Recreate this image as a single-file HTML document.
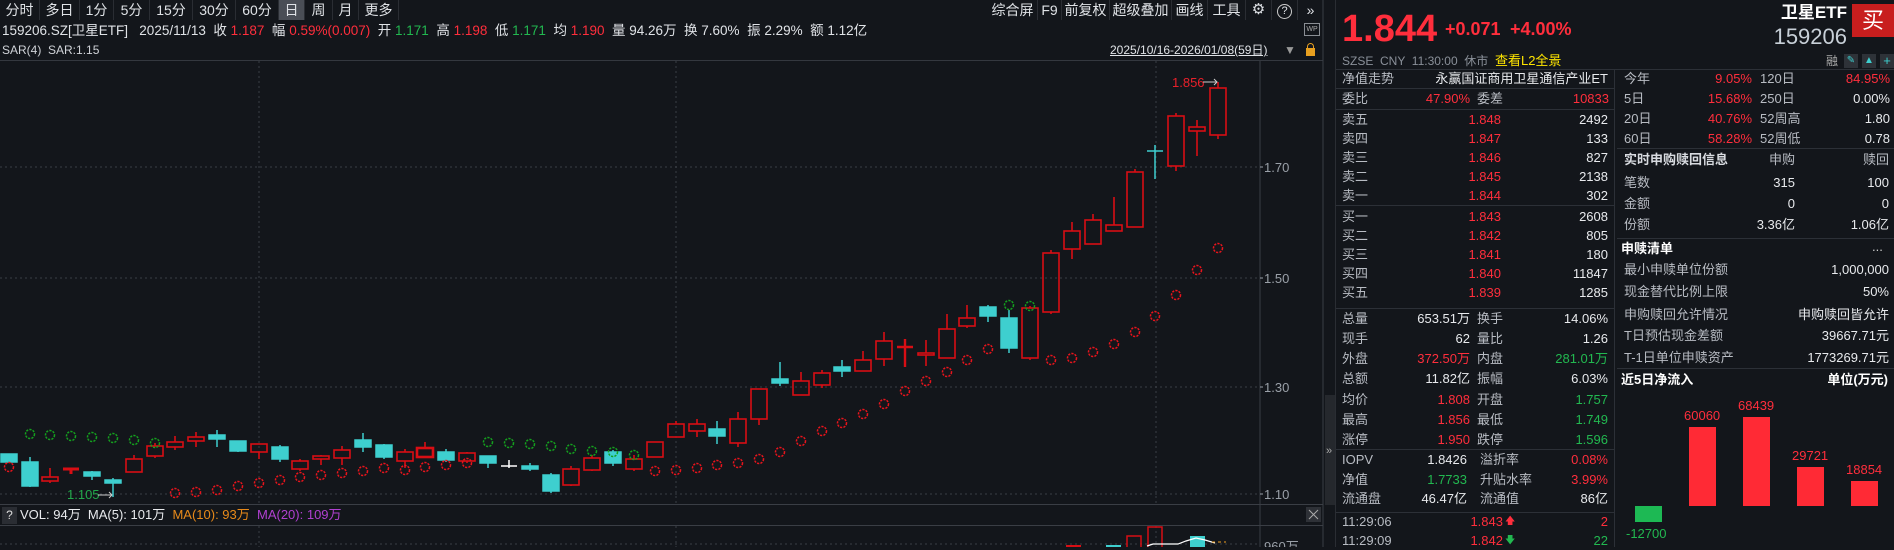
<!DOCTYPE html>
<html><head><meta charset="utf-8">
<style>
*{margin:0;padding:0;box-sizing:border-box}
body{width:1894px;height:547px;background:#13161b;overflow:hidden;position:relative;font-family:"Liberation Sans","Noto Sans CJK SC",sans-serif;color:#d4d7dc;font-size:13px}
.a{position:absolute;white-space:nowrap;line-height:18px;height:18px}
.r{text-align:right}
.red{color:#ff2e3c}.grn{color:#22b850}.wh{color:#e8eaed}.gy{color:#b8bcc3}
.tab{position:absolute;top:0;height:20px;line-height:20px;font-size:14px;color:#dfe2e6;text-align:center;border-right:1px solid #2a2d33}
.hl{position:absolute;height:1px;background:#2c3037}
.vl{position:absolute;width:1px;background:#2c3037}
</style></head><body>

<div class="tab" style="left:0;width:40px">分时</div>
<div class="tab" style="left:40px;width:40px">多日</div>
<div class="tab" style="left:80px;width:34px">1分</div>
<div class="tab" style="left:114px;width:36px">5分</div>
<div class="tab" style="left:150px;width:43px">15分</div>
<div class="tab" style="left:193px;width:43px">30分</div>
<div class="tab" style="left:236px;width:43px">60分</div>
<div class="tab" style="left:279px;width:26px;background:#4a4e56">日</div>
<div class="tab" style="left:305px;width:28px">周</div>
<div class="tab" style="left:333px;width:26px">月</div>
<div class="tab" style="left:359px;width:40px">更多</div>

<div class="tab" style="left:988px;width:50px">综合屏</div>
<div class="tab" style="left:1038px;width:24px">F9</div>
<div class="tab" style="left:1062px;width:48px">前复权</div>
<div class="tab" style="left:1110px;width:62px">超级叠加</div>
<div class="tab" style="left:1172px;width:36px">画线</div>
<div class="tab" style="left:1208px;width:38px">工具</div>
<div class="tab" style="left:1246px;width:26px;font-size:15px">⚙</div>
<div class="tab" style="left:1272px;width:26px"><span style="display:inline-block;width:15px;height:15px;border:1.3px solid #ccc;border-radius:50%;font-size:11px;line-height:13px;vertical-align:middle">?</span></div>
<div class="tab" style="left:1298px;width:25px;border:none">»</div>

<div class="a" style="left:2px;top:22px;font-size:13.5px;color:#e0e3e7">159206.SZ[卫星ETF]&nbsp;&nbsp; 2025/11/13 &nbsp;收 <span class="red">1.187</span> &nbsp;幅 <span class="red">0.59%(0.007)</span> &nbsp;开 <span class="grn">1.171</span> &nbsp;高 <span class="red">1.198</span> &nbsp;低 <span class="grn">1.171</span> &nbsp;均 <span class="red">1.190</span> &nbsp;量 94.26万 &nbsp;换 7.60% &nbsp;振 2.29% &nbsp;额 1.12亿</div>
<div class="a" style="left:2px;top:41px;font-size:12px;color:#d0d3d8">SAR(4) &nbsp;SAR:1.15</div>
<div class="a" style="left:1110px;top:41px;font-size:12px;color:#e0e3e7;text-decoration:underline">2025/10/16-2026/01/08(59日)</div>
<div class="a" style="left:1284px;top:41px;font-size:12px;color:#999">▼</div>
<div style="position:absolute;left:1306px;top:48px;width:9px;height:8px;background:#e8a020"></div>
<div style="position:absolute;left:1307px;top:43px;width:7px;height:6px;border:1.5px solid #e8a020;border-bottom:none;border-radius:4px 4px 0 0"></div>
<div style="position:absolute;left:1304px;top:23px;width:16px;height:13px;border:1px solid #8a8e94;font-size:7px;color:#aaa;line-height:11px;text-align:center">WP</div>
<div class="hl" style="left:0;top:60px;width:1323px;background:#34383f"></div>

<svg style="position:absolute;left:0;top:0" width="1335" height="547" xmlns="http://www.w3.org/2000/svg">
<g stroke="#3a3e45" stroke-dasharray="2,3" stroke-width="1">
<line x1="0" y1="167" x2="1260" y2="167"/><line x1="0" y1="278" x2="1260" y2="278"/><line x1="0" y1="387" x2="1260" y2="387"/><line x1="0" y1="494" x2="1260" y2="494"/>
<line x1="259" y1="61" x2="259" y2="504"/><line x1="676" y1="61" x2="676" y2="504"/><line x1="1156" y1="61" x2="1156" y2="504"/>
<line x1="259" y1="526" x2="259" y2="547"/><line x1="676" y1="526" x2="676" y2="547"/><line x1="1156" y1="526" x2="1156" y2="547"/>
<line x1="0" y1="544" x2="1260" y2="544"/>
</g>
<line x1="1260" y1="61" x2="1260" y2="547" stroke="#3a3e45"/>
<line x1="1323" y1="0" x2="1323" y2="547" stroke="#3a3e45"/>
<line x1="0" y1="504.5" x2="1323" y2="504.5" stroke="#3a3e45"/>
<line x1="0" y1="525.5" x2="1323" y2="525.5" stroke="#3a3e45"/>
<g fill="#9aa0a8" font-size="13" font-family="Liberation Sans,sans-serif">
<text x="1264" y="172">1.70</text><text x="1264" y="283">1.50</text><text x="1264" y="392">1.30</text><text x="1264" y="499">1.10</text><text x="1264" y="551">960万</text>
</g>
<g stroke="#9aa0a8"><line x1="1260" y1="167" x2="1263" y2="167"/><line x1="1260" y1="278" x2="1263" y2="278"/><line x1="1260" y1="387" x2="1263" y2="387"/><line x1="1260" y1="494" x2="1263" y2="494"/></g>

<g fill="#3ecfcf" stroke="#3ecfcf" stroke-width="1.5">
<rect x="1" y="454" width="16" height="8"/>
<line x1="30" y1="457" x2="30" y2="487"/><rect x="22" y="462" width="16" height="24"/>
<line x1="92" y1="471" x2="92" y2="480"/><rect x="84" y="472" width="16" height="4"/>
<line x1="113" y1="478" x2="113" y2="497"/><rect x="105" y="480" width="16" height="3"/>
<line x1="217" y1="430" x2="217" y2="447"/><rect x="209" y="435" width="16" height="4"/>
<line x1="238" y1="441" x2="238" y2="452"/><rect x="230" y="441" width="16" height="10"/>
<line x1="280" y1="445" x2="280" y2="462"/><rect x="272" y="447" width="16" height="12"/>
<line x1="363" y1="433" x2="363" y2="452"/><rect x="355" y="440" width="16" height="7"/>
<line x1="384" y1="444" x2="384" y2="459"/><rect x="376" y="445" width="16" height="12"/>
<line x1="446" y1="449" x2="446" y2="462"/><rect x="438" y="452" width="16" height="8"/>
<line x1="488" y1="456" x2="488" y2="468"/><rect x="480" y="456" width="16" height="7"/>
<line x1="530" y1="463" x2="530" y2="471"/><rect x="522" y="466" width="16" height="3"/>
<line x1="551" y1="473" x2="551" y2="493"/><rect x="543" y="475" width="16" height="16"/>
<line x1="613" y1="450" x2="613" y2="466"/><rect x="605" y="452" width="16" height="11"/>
<line x1="717" y1="421" x2="717" y2="444"/><rect x="709" y="429" width="16" height="7"/>
<line x1="780" y1="362" x2="780" y2="386"/><rect x="772" y="379" width="16" height="4"/>
<line x1="842" y1="360" x2="842" y2="377"/><rect x="834" y="367" width="16" height="4"/>
<line x1="988" y1="305" x2="988" y2="322"/><rect x="980" y="307" width="16" height="9"/>
<line x1="1009" y1="310" x2="1009" y2="353"/><rect x="1001" y="318" width="16" height="30"/>
<line x1="1155" y1="145" x2="1155" y2="179"/><line x1="1147" y1="151" x2="1163" y2="151"/>
</g>
<g stroke="#ffffff" stroke-width="1.5"><line x1="509" y1="460" x2="509" y2="468"/><line x1="501" y1="466" x2="517" y2="466"/></g>
<g fill="none" stroke="#d80e14" stroke-width="1.6">
<path d="M50 468V477M50 481V483"/><rect x="42" y="477" width="16" height="4"/>
<path d="M71 468V474M63 469H79" stroke-width="3"/>
<path d="M134 455V459"/><rect x="126" y="459" width="16" height="13"/>
<path d="M155 443V446M155 456V458"/><rect x="147" y="446" width="16" height="10"/>
<path d="M175 436V442M175 447V450"/><rect x="167" y="442" width="16" height="5"/>
<path d="M196 432V437M196 441V447"/><rect x="188" y="437" width="16" height="4"/>
<path d="M259 452V459"/><rect x="251" y="444" width="16" height="8"/>
<path d="M300 459V461M300 469V471"/><rect x="292" y="461" width="16" height="8"/>
<path d="M321 455V456M321 459V465"/><rect x="313" y="456" width="16" height="3"/>
<path d="M342 446V450M342 458V465"/><rect x="334" y="450" width="16" height="8"/>
<path d="M405 449V452M405 461V468"/><rect x="397" y="452" width="16" height="9"/>
<path d="M425 442V448"/><rect x="417" y="448" width="16" height="9" stroke-width="2.6"/>
<path d="M467 452V453M467 461V463"/><rect x="459" y="453" width="16" height="8"/>
<path d="M571 466V469M571 485V486"/><rect x="563" y="469" width="16" height="16"/>
<path d="M592 455V458M592 470V471"/><rect x="584" y="458" width="16" height="12"/>
<path d="M634 455V459M634 469V471"/><rect x="626" y="459" width="16" height="10"/>
<rect x="647" y="442" width="16" height="15"/>
<path d="M676 421V424"/><rect x="668" y="424" width="16" height="13"/>
<path d="M697 419V424M697 431V437"/><rect x="689" y="424" width="16" height="7"/>
<path d="M738 412V419M738 443V447"/><rect x="730" y="419" width="16" height="24"/>
<path d="M759 419V425"/><rect x="751" y="389" width="16" height="30"/>
<path d="M801 372V381"/><rect x="793" y="381" width="16" height="14"/>
<path d="M822 370V373M822 385V388"/><rect x="814" y="373" width="16" height="12"/>
<path d="M863 351V360"/><rect x="855" y="360" width="16" height="11"/>
<path d="M884 332V341M884 359V366"/><rect x="876" y="341" width="16" height="18"/>
<path d="M905 339V367M897 347H913" stroke-width="2.4"/>
<path d="M926 340V353M926 355V366"/><rect x="918" y="353" width="16" height="2"/>
<path d="M947 314V329"/><rect x="939" y="329" width="16" height="29"/>
<path d="M967 305V318M967 326V328"/><rect x="959" y="318" width="16" height="8"/>
<path d="M1030 306V308M1030 358V360"/><rect x="1022" y="308" width="16" height="50"/>
<path d="M1051 250V253M1051 312V314"/><rect x="1043" y="253" width="16" height="59"/>
<path d="M1072 222V231M1072 249V259"/><rect x="1064" y="231" width="16" height="18"/>
<path d="M1093 214V220"/><rect x="1085" y="220" width="16" height="24"/>
<path d="M1114 197V225"/><rect x="1106" y="225" width="16" height="6"/>
<path d="M1135 169V172"/><rect x="1127" y="172" width="16" height="55"/>
<path d="M1176 113V116M1176 166V171"/><rect x="1168" y="116" width="16" height="50"/>
<path d="M1197 120V127M1197 131V156"/><rect x="1189" y="127" width="16" height="4"/>
<path d="M1218 82V88M1218 135V139"/><rect x="1210" y="88" width="16" height="47"/>
</g>
<g fill="none" stroke="#e8141c" stroke-width="1.5" stroke-dasharray="2.2,1.2">
<circle cx="9" cy="467" r="4.5"/>
<circle cx="175" cy="493" r="4.5"/><circle cx="196" cy="492" r="4.5"/><circle cx="217" cy="490" r="4.5"/><circle cx="238" cy="486" r="4.5"/><circle cx="259" cy="483" r="4.5"/><circle cx="280" cy="480" r="4.5"/><circle cx="300" cy="477" r="4.5"/><circle cx="321" cy="475" r="4.5"/><circle cx="342" cy="473" r="4.5"/><circle cx="363" cy="471" r="4.5"/><circle cx="384" cy="468" r="4.5"/><circle cx="405" cy="470" r="4.5"/><circle cx="425" cy="467" r="4.5"/><circle cx="446" cy="465" r="4.5"/><circle cx="467" cy="463" r="4.5"/>
<circle cx="655" cy="471" r="4.5"/><circle cx="676" cy="470" r="4.5"/><circle cx="697" cy="468" r="4.5"/><circle cx="717" cy="465" r="4.5"/><circle cx="738" cy="463" r="4.5"/><circle cx="759" cy="459" r="4.5"/><circle cx="780" cy="452" r="4.5"/><circle cx="801" cy="441" r="4.5"/><circle cx="822" cy="431" r="4.5"/><circle cx="842" cy="423" r="4.5"/><circle cx="863" cy="414" r="4.5"/><circle cx="884" cy="404" r="4.5"/><circle cx="905" cy="391" r="4.5"/><circle cx="926" cy="381" r="4.5"/><circle cx="947" cy="372" r="4.5"/><circle cx="967" cy="360" r="4.5"/><circle cx="988" cy="349" r="4.5"/>
<circle cx="1051" cy="360" r="4.5"/><circle cx="1072" cy="358" r="4.5"/><circle cx="1093" cy="352" r="4.5"/><circle cx="1114" cy="344" r="4.5"/><circle cx="1135" cy="332" r="4.5"/><circle cx="1155" cy="316" r="4.5"/><circle cx="1176" cy="295" r="4.5"/><circle cx="1197" cy="270" r="4.5"/><circle cx="1218" cy="248" r="4.5"/>
</g>
<g fill="none" stroke="#14a01e" stroke-width="1.5" stroke-dasharray="2.2,1.2">
<circle cx="30" cy="434" r="4.5"/><circle cx="50" cy="435" r="4.5"/><circle cx="71" cy="436" r="4.5"/><circle cx="92" cy="437" r="4.5"/><circle cx="113" cy="438" r="4.5"/><circle cx="134" cy="440" r="4.5"/><circle cx="155" cy="443" r="4.5"/>
<circle cx="488" cy="442" r="4.5"/><circle cx="509" cy="443" r="4.5"/><circle cx="530" cy="444" r="4.5"/><circle cx="551" cy="446" r="4.5"/><circle cx="571" cy="449" r="4.5"/><circle cx="592" cy="451" r="4.5"/><circle cx="613" cy="452" r="4.5"/><circle cx="634" cy="455" r="4.5"/>
<circle cx="1009" cy="305" r="4.5"/><circle cx="1030" cy="306" r="4.5"/>
</g>
<text x="67" y="499" fill="#22a84a" font-size="13" font-family="Liberation Sans,sans-serif">1.105</text>
<path d="M98 495H112M109 492L112 495L109 498" stroke="#ccc" fill="none"/>
<text x="1172" y="87" fill="#e8202a" font-size="13" font-family="Liberation Sans,sans-serif">1.856</text>
<path d="M1203 82H1217M1214 79L1217 82L1214 85" stroke="#ccc" fill="none"/>
<rect x="1066" y="545" width="15" height="3" fill="#d80e14"/>
<rect x="1106" y="545" width="15" height="3" fill="#3ecfcf"/>
<rect x="1127" y="536" width="14" height="12" fill="none" stroke="#d80e14" stroke-width="1.5"/>
<rect x="1148" y="527" width="14" height="21" fill="none" stroke="#d80e14" stroke-width="1.5"/>
<rect x="1190" y="536" width="15" height="12" fill="#3ecfcf"/>
<path d="M1147 546L1153 544H1178L1186 541L1196 538L1205 540L1215 543" stroke="#fff" fill="none" stroke-width="1.2"/>
<path d="M1212 542H1226" stroke="#f0a020" stroke-dasharray="3,3"/>
<rect x="1306" y="507" width="15" height="15" fill="#2e3137"/>
<path d="M1309 510L1318 519M1318 510L1309 519" stroke="#aaa"/>
<rect x="1325" y="395" width="10" height="110" fill="#25282d"/>
<text x="1326" y="454" fill="#aaa" font-size="11">»</text>
</svg>

<div style="position:absolute;left:2px;top:507px;width:15px;height:17px;background:#2a2d33;color:#ddd;font-size:12px;line-height:17px;text-align:center">?</div>
<div class="a" style="left:20px;top:506px;font-size:13px;color:#e8eaed">VOL: 94万 &nbsp;MA(5): 101万 &nbsp;<span style="color:#e88a1a">MA(10): 93万</span> &nbsp;<span style="color:#b040d0">MA(20): 109万</span></div>

<div class="vl" style="left:1335px;top:0;height:547px;background:#2a2d33"></div>
<div class="a red" style="left:1342px;top:8px;height:42px;line-height:42px;font-size:38px;font-weight:bold">1.844</div>
<div class="a red" style="left:1445px;top:19px;height:20px;line-height:20px;font-size:18px;font-weight:bold">+0.071</div>
<div class="a red" style="left:1510px;top:19px;height:20px;line-height:20px;font-size:18px;font-weight:bold">+4.00%</div>
<div class="a r" style="right:47px;top:3px;font-size:17px;font-weight:bold;color:#fff;height:20px;line-height:20px">卫星ETF</div>
<div class="a r" style="right:47px;top:24px;font-size:22px;color:#c8d0d8;height:26px;line-height:26px">159206</div>
<div style="position:absolute;left:1852px;top:4px;width:42px;height:33px;background:#c81e1e;color:#fff;font-size:22px;line-height:33px;text-align:center">买</div>
<div class="a" style="left:1342px;top:52px;font-size:12px;color:#8a9099">SZSE &nbsp;CNY &nbsp;11:30:00 &nbsp;休市 &nbsp;<span style="color:#ffe600;font-size:13px">查看L2全景</span></div>
<div class="a" style="left:1826px;top:52px;font-size:12px;color:#aaa">融</div>
<div style="position:absolute;left:1844px;top:54px;width:14px;height:14px;background:#2e3238;color:#3ecfcf;font-size:10px;text-align:center;line-height:14px">✎</div>
<div style="position:absolute;left:1862px;top:54px;width:14px;height:14px;background:#2e3238;color:#3ecfcf;font-size:10px;text-align:center;line-height:14px">▲</div>
<div style="position:absolute;left:1880px;top:54px;width:14px;height:14px;background:#2e3238;color:#3ecfcf;font-size:13px;text-align:center;line-height:14px">+</div>
<div class="hl" style="left:1336px;top:69px;width:558px"></div>
<div class="vl" style="left:1614px;top:70px;height:477px"></div>

<div class="a gy" style="left:1342px;top:70px">净值走势</div><div class="a r wh" style="right:286px;top:70px">永赢国证商用卫星通信产业ET</div>
<div class="hl" style="left:1336px;top:88px;width:278px"></div>
<div class="a gy" style="left:1342px;top:90px">委比</div><div class="a r red" style="right:424px;top:90px">47.90%</div><div class="a gy" style="left:1477px;top:90px">委差</div><div class="a r red" style="right:285px;top:90px">10833</div>
<div class="hl" style="left:1336px;top:109px;width:278px"></div>

<div class="a gy" style="left:1342px;top:111px">卖五</div><div class="a r red" style="right:393px;top:111px">1.848</div><div class="a r wh" style="right:286px;top:111px">2492</div>
<div class="a gy" style="left:1342px;top:130px">卖四</div><div class="a r red" style="right:393px;top:130px">1.847</div><div class="a r wh" style="right:286px;top:130px">133</div>
<div class="a gy" style="left:1342px;top:149px">卖三</div><div class="a r red" style="right:393px;top:149px">1.846</div><div class="a r wh" style="right:286px;top:149px">827</div>
<div class="a gy" style="left:1342px;top:168px">卖二</div><div class="a r red" style="right:393px;top:168px">1.845</div><div class="a r wh" style="right:286px;top:168px">2138</div>
<div class="a gy" style="left:1342px;top:187px">卖一</div><div class="a r red" style="right:393px;top:187px">1.844</div><div class="a r wh" style="right:286px;top:187px">302</div>
<div class="hl" style="left:1336px;top:205px;width:278px"></div>
<div class="a gy" style="left:1342px;top:208px">买一</div><div class="a r red" style="right:393px;top:208px">1.843</div><div class="a r wh" style="right:286px;top:208px">2608</div>
<div class="a gy" style="left:1342px;top:227px">买二</div><div class="a r red" style="right:393px;top:227px">1.842</div><div class="a r wh" style="right:286px;top:227px">805</div>
<div class="a gy" style="left:1342px;top:246px">买三</div><div class="a r red" style="right:393px;top:246px">1.841</div><div class="a r wh" style="right:286px;top:246px">180</div>
<div class="a gy" style="left:1342px;top:265px">买四</div><div class="a r red" style="right:393px;top:265px">1.840</div><div class="a r wh" style="right:286px;top:265px">11847</div>
<div class="a gy" style="left:1342px;top:284px">买五</div><div class="a r red" style="right:393px;top:284px">1.839</div><div class="a r wh" style="right:286px;top:284px">1285</div>
<div class="hl" style="left:1336px;top:308px;width:278px"></div>

<div class="a gy" style="left:1342px;top:310px">总量</div><div class="a r wh" style="right:424px;top:310px">653.51万</div><div class="a gy" style="left:1477px;top:310px">换手</div><div class="a r wh" style="right:286px;top:310px">14.06%</div>
<div class="a gy" style="left:1342px;top:330px">现手</div><div class="a r wh" style="right:424px;top:330px">62</div><div class="a gy" style="left:1477px;top:330px">量比</div><div class="a r wh" style="right:286px;top:330px">1.26</div>
<div class="a gy" style="left:1342px;top:350px">外盘</div><div class="a r red" style="right:424px;top:350px">372.50万</div><div class="a gy" style="left:1477px;top:350px">内盘</div><div class="a r grn" style="right:286px;top:350px">281.01万</div>
<div class="a gy" style="left:1342px;top:370px">总额</div><div class="a r wh" style="right:424px;top:370px">11.82亿</div><div class="a gy" style="left:1477px;top:370px">振幅</div><div class="a r wh" style="right:286px;top:370px">6.03%</div>
<div class="a gy" style="left:1342px;top:391px">均价</div><div class="a r red" style="right:424px;top:391px">1.808</div><div class="a gy" style="left:1477px;top:391px">开盘</div><div class="a r grn" style="right:286px;top:391px">1.757</div>
<div class="a gy" style="left:1342px;top:411px">最高</div><div class="a r red" style="right:424px;top:411px">1.856</div><div class="a gy" style="left:1477px;top:411px">最低</div><div class="a r grn" style="right:286px;top:411px">1.749</div>
<div class="a gy" style="left:1342px;top:431px">涨停</div><div class="a r red" style="right:424px;top:431px">1.950</div><div class="a gy" style="left:1477px;top:431px">跌停</div><div class="a r grn" style="right:286px;top:431px">1.596</div>
<div class="hl" style="left:1336px;top:449px;width:278px"></div>
<div class="a gy" style="left:1342px;top:451px">IOPV</div><div class="a r wh" style="right:427px;top:451px">1.8426</div><div class="a gy" style="left:1480px;top:451px">溢折率</div><div class="a r red" style="right:286px;top:451px">0.08%</div>
<div class="a gy" style="left:1342px;top:471px">净值</div><div class="a r grn" style="right:427px;top:471px">1.7733</div><div class="a gy" style="left:1480px;top:471px">升贴水率</div><div class="a r red" style="right:286px;top:471px">3.99%</div>
<div class="a gy" style="left:1342px;top:490px">流通盘</div><div class="a r wh" style="right:427px;top:490px">46.47亿</div><div class="a gy" style="left:1480px;top:490px">流通值</div><div class="a r wh" style="right:286px;top:490px">86亿</div>
<div class="hl" style="left:1336px;top:512px;width:278px"></div>
<div class="a gy" style="left:1342px;top:513px">11:29:06</div><div class="a r red" style="right:391px;top:513px">1.843</div><div class="a red" style="left:1505px;top:513px;font-size:10px">🡅</div><div class="a r red" style="right:286px;top:513px">2</div>
<div class="a gy" style="left:1342px;top:532px">11:29:09</div><div class="a r red" style="right:391px;top:532px">1.842</div><div class="a grn" style="left:1505px;top:532px;font-size:10px">🡇</div><div class="a r grn" style="right:286px;top:532px">22</div>

<div class="a gy" style="left:1624px;top:70px">今年</div><div class="a r red" style="right:142px;top:70px">9.05%</div><div class="a gy" style="left:1760px;top:70px">120日</div><div class="a r red" style="right:4px;top:70px">84.95%</div>
<div class="a gy" style="left:1624px;top:90px">5日</div><div class="a r red" style="right:142px;top:90px">15.68%</div><div class="a gy" style="left:1760px;top:90px">250日</div><div class="a r wh" style="right:4px;top:90px">0.00%</div>
<div class="a gy" style="left:1624px;top:110px">20日</div><div class="a r red" style="right:142px;top:110px">40.76%</div><div class="a gy" style="left:1760px;top:110px">52周高</div><div class="a r wh" style="right:4px;top:110px">1.80</div>
<div class="a gy" style="left:1624px;top:130px">60日</div><div class="a r red" style="right:142px;top:130px">58.28%</div><div class="a gy" style="left:1760px;top:130px">52周低</div><div class="a r wh" style="right:4px;top:130px">0.78</div>
<div class="hl" style="left:1617px;top:148px;width:277px"></div>
<div class="a" style="left:1624px;top:151px;color:#d8dbe0;font-weight:bold">实时申购赎回信息</div><div class="a r gy" style="right:99px;top:151px">申购</div><div class="a r gy" style="right:5px;top:151px">赎回</div>
<div class="a gy" style="left:1624px;top:174px">笔数</div><div class="a r wh" style="right:99px;top:174px">315</div><div class="a r wh" style="right:5px;top:174px">100</div>
<div class="a gy" style="left:1624px;top:195px">金额</div><div class="a r wh" style="right:99px;top:195px">0</div><div class="a r wh" style="right:5px;top:195px">0</div>
<div class="a gy" style="left:1624px;top:216px">份额</div><div class="a r wh" style="right:99px;top:216px">3.36亿</div><div class="a r wh" style="right:5px;top:216px">1.06亿</div>
<div class="hl" style="left:1617px;top:238px;width:277px"></div>
<div class="a" style="left:1621px;top:240px;color:#fff;font-weight:bold">申赎清单</div><div class="a" style="left:1872px;top:238px;color:#ccc">...</div>
<div class="a gy" style="left:1624px;top:261px">最小申赎单位份额</div><div class="a r wh" style="right:5px;top:261px">1,000,000</div>
<div class="a gy" style="left:1624px;top:283px">现金替代比例上限</div><div class="a r wh" style="right:5px;top:283px">50%</div>
<div class="a gy" style="left:1624px;top:306px">申购赎回允许情况</div><div class="a r wh" style="right:5px;top:306px">申购赎回皆允许</div>
<div class="a gy" style="left:1624px;top:327px">T日预估现金差额</div><div class="a r wh" style="right:5px;top:327px">39667.71元</div>
<div class="a gy" style="left:1624px;top:349px">T-1日单位申赎资产</div><div class="a r wh" style="right:5px;top:349px">1773269.71元</div>
<div class="hl" style="left:1617px;top:368px;width:277px"></div>
<div class="a" style="left:1621px;top:371px;color:#fff;font-weight:bold">近5日净流入</div><div class="a r" style="right:6px;top:371px;color:#fff;font-weight:bold">单位(万元)</div>

<div style="position:absolute;left:1635px;top:506px;width:27px;height:16px;background:#1db954"></div>
<div class="a grn" style="left:1626px;top:525px;font-size:13px">-12700</div>
<div style="position:absolute;left:1689px;top:427px;width:27px;height:79px;background:#ff2a35"></div>
<div class="a red" style="left:1684px;top:407px;font-size:13px">60060</div>
<div style="position:absolute;left:1743px;top:417px;width:27px;height:89px;background:#ff2a35"></div>
<div class="a red" style="left:1738px;top:397px;font-size:13px">68439</div>
<div style="position:absolute;left:1797px;top:467px;width:27px;height:39px;background:#ff2a35"></div>
<div class="a red" style="left:1792px;top:447px;font-size:13px">29721</div>
<div style="position:absolute;left:1851px;top:481px;width:27px;height:25px;background:#ff2a35"></div>
<div class="a red" style="left:1846px;top:461px;font-size:13px">18854</div>
</body></html>
